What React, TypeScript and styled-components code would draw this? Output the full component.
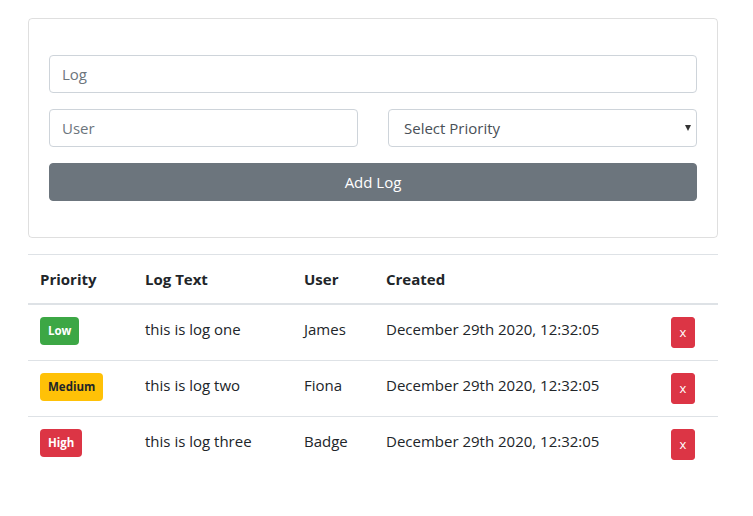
import * as React from 'react';
import styled, { createGlobalStyle } from 'styled-components';

const GlobalStyle = createGlobalStyle`
	* { box-sizing: border-box; }
	body {
		margin: 0;
		background: #fff;
		color: #212529;
		font-family: "Open Sans", Lato, sans-serif;
		font-size: 15px;
		line-height: 24px;
	}
`;

type Priority = 'low' | 'moderate' | 'high';

interface ILog {
	id: number;
	text: string;
	user: string;
	priority: Priority;
	created: string;
}

const logs: ILog[] = [
	{ id: 1, text: 'this is log one', user: 'James', priority: 'low', created: 'December 29th 2020, 12:32:05' },
	{ id: 2, text: 'this is log two', user: 'Fiona', priority: 'moderate', created: 'December 29th 2020, 12:32:05' },
	{ id: 3, text: 'this is log three', user: 'Badge', priority: 'high', created: 'December 29th 2020, 12:32:05' }
];

const badgeColors: Record<Priority, { bg: string; fg: string; label: string }> = {
	low: { bg: '#3ca745', fg: '#fff', label: 'Low' },
	moderate: { bg: '#ffc107', fg: '#212529', label: 'Medium' },
	high: { bg: '#dc3545', fg: '#fff', label: 'High' }
};

const Container = styled.div`
	width: 690px;
	margin: 18px 0 0 28px;
`;

const Card = styled.div`
	border: 1px solid rgba(0, 0, 0, 0.125);
	border-radius: 4px;
	padding: 36px 20px 36px 20px;
	margin-bottom: 16px;
`;

const Form = styled.form`
	display: flex;
	flex-direction: column;
	gap: 16px;
`;

const Row = styled.div`
	display: grid;
	grid-template-columns: 1fr 1fr;
	column-gap: 30px;
`;

const Input = styled.input`
	display: block;
	width: 100%;
	height: 38px;
	padding: 6px 12px;
	font: inherit;
	color: #495057;
	border: 1px solid #ced4da;
	border-radius: 4px;
	background: #fff;
	outline: none;
	&::placeholder {
		color: #6c757d;
	}
`;

const SelectWrap = styled.div`
	position: relative;
`;

const Select = styled.select`
	display: block;
	width: 100%;
	height: 38px;
	padding: 6px 12px 6px 15px;
	font: inherit;
	color: #495057;
	border: 1px solid #ced4da;
	border-radius: 4px;
	background: #fff;
	appearance: none;
	outline: none;
`;

const Caret = styled.span`
	position: absolute;
	right: 6px;
	top: 50%;
	margin-top: -3px;
	width: 0;
	height: 0;
	border-left: 3.5px solid transparent;
	border-right: 3.5px solid transparent;
	border-top: 6px solid #333;
	pointer-events: none;
`;

const SubmitButton = styled.button`
	display: block;
	width: 100%;
	height: 38px;
	border: 1px solid #6c757d;
	border-radius: 4px;
	background: #6c757d;
	color: #fff;
	font: inherit;
	cursor: pointer;
`;

const Table = styled.table`
	width: 100%;
	border-collapse: collapse;
	table-layout: fixed;
`;

const Th = styled.th<{ $w?: number }>`
	width: ${p => (p.$w ? `${p.$w}px` : 'auto')};
	text-align: left;
	font-weight: 700;
	padding: 12px;
	border-top: 1px solid #dee2e6;
	border-bottom: 2px solid #dee2e6;
`;

const Td = styled.td`
	padding: 12px;
	vertical-align: top;
	border-top: 1px solid #dee2e6;
`;

const Badge = styled.span<{ $bg: string; $fg: string }>`
	display: inline-block;
	padding: 8px;
	font-size: 11.5px;
	font-weight: 700;
	line-height: 12px;
	border-radius: 4px;
	background: ${p => p.$bg};
	color: ${p => p.$fg};
	vertical-align: middle;
`;

const DeleteButton = styled.button`
	width: 24px;
	height: 31px;
	padding: 0;
	border: 1px solid #dc3545;
	border-radius: 3px;
	background: #dc3545;
	color: #fff;
	font-family: inherit;
	font-size: 13px;
	line-height: 1.5;
	cursor: pointer;
`;

const App: React.FunctionComponent = () => {
	return (
		<Container>
			<GlobalStyle />
			<Card>
				<Form onSubmit={e => e.preventDefault()}>
					<Input type="text" placeholder="Log" />
					<Row>
						<Input type="text" placeholder="User" />
						<SelectWrap>
							<Select defaultValue="">
								<option value="" disabled>
									Select Priority
								</option>
								<option value="low">Low</option>
								<option value="moderate">Moderate</option>
								<option value="high">High</option>
							</Select>
							<Caret />
						</SelectWrap>
					</Row>
					<SubmitButton type="submit">Add Log</SubmitButton>
				</Form>
			</Card>
			<Table>
				<thead>
					<tr>
						<Th $w={105}>Priority</Th>
						<Th $w={159}>Log Text</Th>
						<Th $w={82}>User</Th>
						<Th $w={285}>Created</Th>
						<Th />
					</tr>
				</thead>
				<tbody>
					{logs.map(log => {
						const b = badgeColors[log.priority];
						return (
							<tr key={log.id}>
								<Td>
									<Badge $bg={b.bg} $fg={b.fg}>
										{b.label}
									</Badge>
								</Td>
								<Td>{log.text}</Td>
								<Td>{log.user}</Td>
								<Td>{log.created}</Td>
								<Td>
									<DeleteButton>x</DeleteButton>
								</Td>
							</tr>
						);
					})}
				</tbody>
			</Table>
		</Container>
	);
};

export default App;
